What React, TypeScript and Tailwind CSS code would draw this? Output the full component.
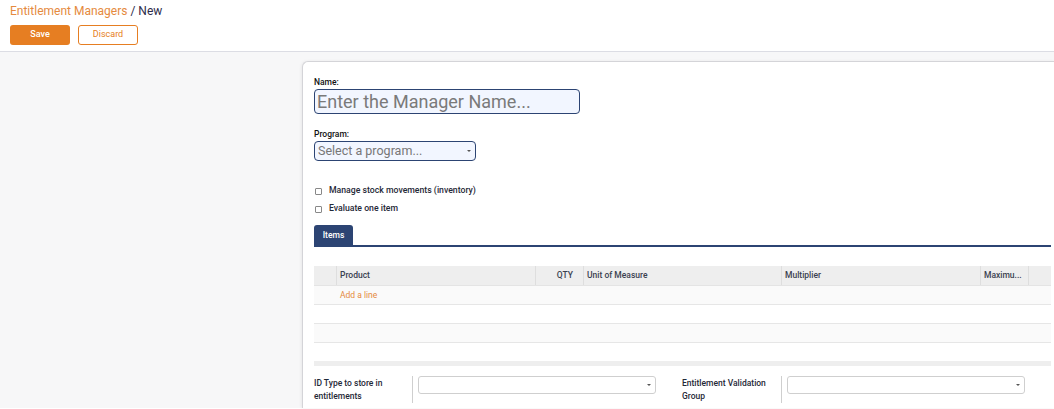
import React from "react";

const font = { fontFamily: "Roboto, 'Liberation Sans', sans-serif" };

function Caret() {
    return <span className="block w-0 h-0 border-l-[2px] border-r-[2px] border-t-[2px] border-l-transparent border-r-transparent border-t-[#555]" />;
}

function Check({ label }: { label: string }) {
    return (
        <div className="flex items-center h-[18px]">
            <span className="ml-[1px] w-[7px] h-[7px] border border-[#888] rounded-[1px] bg-white" />
            <span className="ml-[7px] text-[8.7px] font-medium text-[#1f2937]">{label}</span>
        </div>
    );
}

export default function App() {
    const cols = [
        { label: "", w: "w-[23px]" },
        { label: "Product", w: "w-[199px]" },
        { label: "QTY", w: "w-[48px]", right: true },
        { label: "Unit of Measure", w: "w-[198px]" },
        { label: "Multiplier", w: "w-[199px]" },
        { label: "Maximu...", w: "w-[48px]" },
    ];

    return (
        <div className="w-[1054px] h-[409px] overflow-hidden bg-white" style={font}>
            {/* Control panel */}
            <div className="h-[52px] px-[10px] pt-[2px] border-b border-[#dcdde4] bg-white">
                <div className="text-[12px] leading-[18px]">
                    <span className="text-[#e58a3e]">Entitlement Managers</span>
                    <span className="text-[#2d2b4a]"> / New</span>
                </div>
                <div className="flex gap-[8px] mt-[5px]">
                    <button className="w-[60px] h-[20px] rounded-[3px] bg-[#e67e22] text-white text-[9px] font-medium">Save</button>
                    <button className="w-[60px] h-[20px] rounded-[3px] border border-[#e67e22] bg-white text-[#e67e22] text-[9px]">Discard</button>
                </div>
            </div>

            {/* Form area */}
            <div className="flex h-[356px] bg-[#f7f7f8] pt-[9px]">
                <div className="w-[302px] shrink-0" />
                <div className="flex-1 bg-white border-l border-t border-[#d4d4d8] rounded-tl-[6px] shadow-[-1px_0_3px_rgba(0,0,0,0.06)] pl-[11px] pr-[4px] pt-[14px]">
                    <div className="text-[8.5px] font-medium text-[#111] leading-[12px]">Name:</div>
                    <div className="mt-[1px] w-[266px] h-[25px] rounded-[4px] border border-[#2c4473] bg-[#f2f6ff] flex items-center px-[2px]">
                        <span className="text-[18px] text-[#7a7a7a] leading-none">Enter the Manager Name...</span>
                    </div>

                    <div className="mt-[14px] text-[8.5px] font-medium text-[#111] leading-[12px]">Program:</div>
                    <div className="mt-[1px] w-[162px] h-[20px] rounded-[4px] border border-[#2c4473] bg-[#f2f6ff] flex items-center justify-between pl-[3px] pr-[4px]">
                        <span className="text-[12.5px] text-[#777] leading-none">Select a program...</span>
                        <Caret />
                    </div>

                    <div className="mt-[21px]">
                        <Check label="Manage stock movements (inventory)" />
                        <Check label="Evaluate one item" />
                    </div>

                    {/* Tabs */}
                    <div className="mt-[7px] border-b-2 border-[#2c4473] flex">
                        <div className="w-[39px] h-[20px] bg-[#2c4473] rounded-t-[3px] flex items-center justify-center text-white text-[8.5px] font-medium">Items</div>
                    </div>

                    {/* Table */}
                    <div className="mt-[19px] w-[737px]">
                        <div className="flex h-[20px] bg-[#eeeeee] border-b border-[#e4e4e4]">
                            {cols.map((c, i) => (
                                <div
                                    key={i}
                                    className={`${c.w} shrink-0 border-r border-[#dedede] flex items-center px-[3px] text-[8.5px] font-medium text-[#3a4150] ${c.right ? "justify-end pr-[10px]" : ""}`}
                                >
                                    {c.label}
                                </div>
                            ))}
                            <div className="flex-1" />
                        </div>
                        <div className="h-[19px] bg-[#fafafa] border-b border-[#e6e6e6] flex items-center pl-[26px] text-[8.5px] text-[#e58a3e]">Add a line</div>
                        <div className="h-[19px] bg-white border-b border-[#e6e6e6]" />
                        <div className="h-[19px] bg-[#fafafa] border-b border-[#e6e6e6]" />
                        <div className="h-[18px]" />
                        <div className="h-[5px] bg-[#eeeeee]" />
                    </div>

                    {/* Bottom group */}
                    <div className="mt-[10px] flex">
                        <div className="flex w-[368px]">
                            <div className="w-[99px] shrink-0 border-r border-[#cfcfcf] text-[8.5px] font-medium text-[#1f2937] leading-[13px] pt-[1px]">
                                ID Type to store in entitlements
                            </div>
                            <div className="ml-[5px] w-[238px] h-[18px] border border-[#cfcfcf] rounded-[3px] flex items-center justify-end pr-[4px]">
                                <Caret />
                            </div>
                        </div>
                        <div className="flex">
                            <div className="w-[100px] shrink-0 border-r border-[#cfcfcf] text-[8.5px] font-medium text-[#1f2937] leading-[13px] pt-[1px]">
                                Entitlement Validation Group
                            </div>
                            <div className="ml-[5px] w-[238px] h-[18px] border border-[#cfcfcf] rounded-[3px] flex items-center justify-end pr-[4px]">
                                <Caret />
                            </div>
                        </div>
                    </div>
                </div>
            </div>
        </div>
    );
}
